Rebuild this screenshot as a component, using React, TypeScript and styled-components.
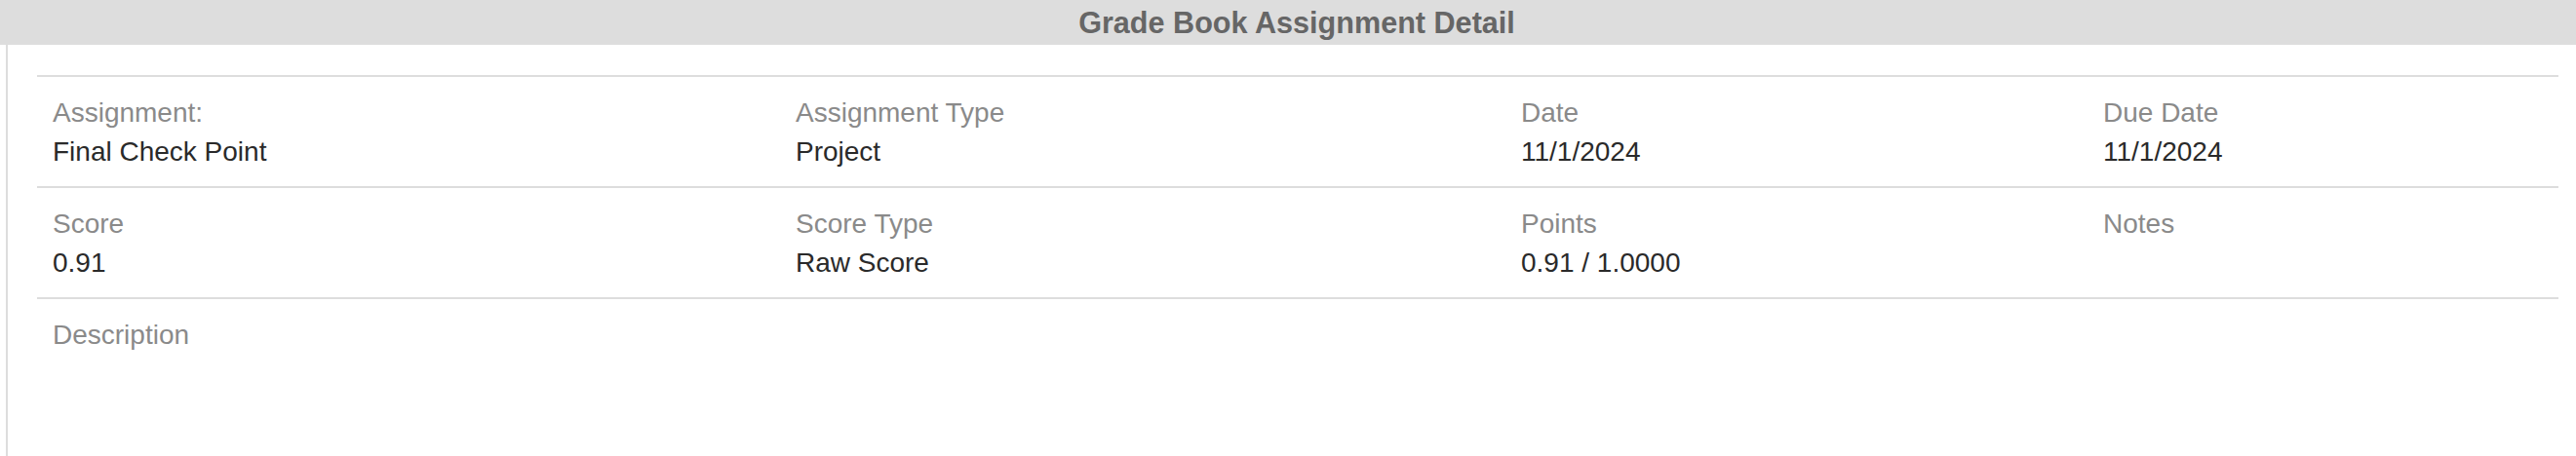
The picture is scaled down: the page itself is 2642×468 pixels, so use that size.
import React from "react";
import styled, { createGlobalStyle } from "styled-components";

const GlobalStyle = createGlobalStyle`
  html, body {
    margin: 0;
    padding: 0;
    background: #ffffff;
    font-family: "Liberation Sans", Arial, Helvetica, sans-serif;
  }
`;

const Page = styled.div`
  width: 2642px;
  height: 468px;
  overflow: hidden;
  display: flex;
  flex-direction: column;
`;

const Header = styled.div`
  height: 46px;
  background: #dddddd;
  display: flex;
  align-items: center;
  justify-content: center;
  padding-left: 18px;
  box-sizing: border-box;
`;

const Title = styled.h1`
  margin: 0;
  font-size: 30.6px;
  line-height: 46px;
  font-weight: 700;
  color: #666666;
`;

const Panel = styled.div`
  flex: 1;
  margin-left: 6px;
  border-left: 2px solid #dddddd;
  padding: 31px 18px 0 30px;
`;

const Row = styled.div`
  display: grid;
  grid-template-columns: 762px 744px 597px 1fr;
  border-top: 2px solid #dddddd;
`;

const Cell = styled.div`
  padding: 17px 16px 15px;
  min-height: 80px;
`;

const Label = styled.div`
  font-size: 28px;
  line-height: 40px;
  color: #8a8a8a;
`;

const Value = styled.div`
  font-size: 28px;
  line-height: 40px;
  color: #2a2a2a;
  min-height: 40px;
`;

type Field = { label: string; value?: string };

const rows: Field[][] = [
  [
    { label: "Assignment:", value: "Final Check Point" },
    { label: "Assignment Type", value: "Project" },
    { label: "Date", value: "11/1/2024" },
    { label: "Due Date", value: "11/1/2024" },
  ],
  [
    { label: "Score", value: "0.91" },
    { label: "Score Type", value: "Raw Score" },
    { label: "Points", value: "0.91 / 1.0000" },
    { label: "Notes", value: "" },
  ],
  [{ label: "Description", value: "" }],
];

export default function App() {
  return (
    <>
      <GlobalStyle />
      <Page>
        <Header>
          <Title>Grade Book Assignment Detail</Title>
        </Header>
        <Panel>
          {rows.map((row, i) => (
            <Row key={i}>
              {row.map((f) => (
                <Cell key={f.label}>
                  <Label>{f.label}</Label>
                  <Value>{f.value}</Value>
                </Cell>
              ))}
            </Row>
          ))}
        </Panel>
      </Page>
    </>
  );
}
